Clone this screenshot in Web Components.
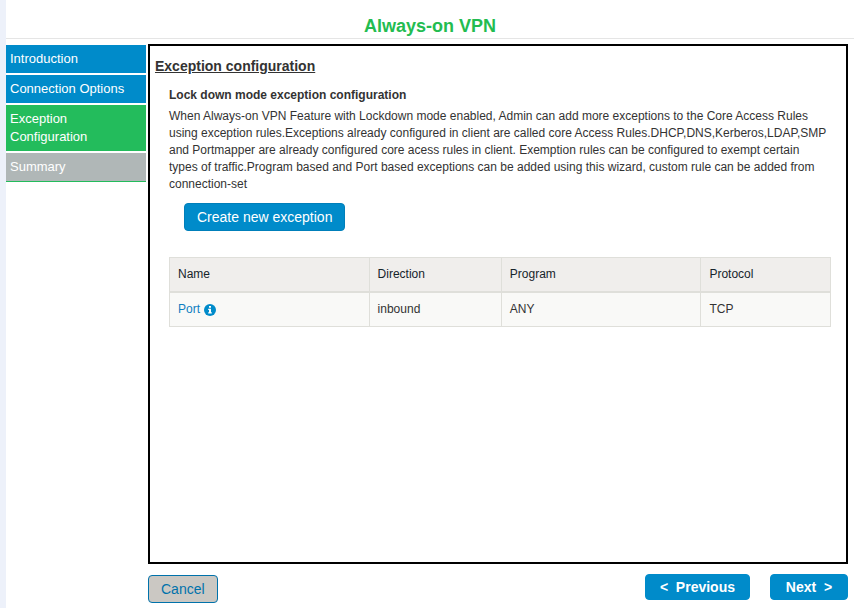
<!DOCTYPE html>
<html lang="en">
<head>
<meta charset="utf-8">
<title>Always-on VPN</title>
<style>
body {
    background-color: #ffffff;
    color: #333333;
    font-family: "Liberation Sans", Arial, sans-serif;
    font-size: 12px;
    line-height: 17px;
    margin: 0;
}
</style>
</head>
<body>

<vpn-wizard heading="Always-on VPN">
    <wizard-step slot="steps" state="done">Introduction</wizard-step>
    <wizard-step slot="steps" state="done">Connection Options</wizard-step>
    <wizard-step slot="steps" state="current">Exception Configuration</wizard-step>
    <wizard-step slot="steps">Summary</wizard-step>

    <exception-panel></exception-panel>

    <wizard-button slot="cancel" kind="cancel">Cancel</wizard-button>
    <wizard-button slot="nav" kind="nav">&lt;&nbsp; Previous</wizard-button>
    <wizard-button slot="nav" kind="nav">Next &nbsp;&gt;</wizard-button>
</vpn-wizard>

<script>
function createTemplate(html) {
    const template = document.createElement('template');
    template.innerHTML = html;
    return template;
}

const wizardTemplate = createTemplate(`<style>
:host {
    border-left: 6px solid #edf1fa;
    box-sizing: border-box;
    display: flex;
    flex-direction: column;
    min-height: 100vh;
}

header {
    border-bottom: 1px solid #e5e5e5;
    padding: 14px 0 0;
}

h1 {
    color: #23bc50;
    font-size: 18px;
    line-height: 24px;
    margin: 0;
    text-align: center;
}

.body {
    display: flex;
    flex: 1;
    gap: 2px;
    padding: 5px 6px 0 0;
}

nav {
    display: flex;
    flex: none;
    flex-direction: column;
    gap: 2px;
    padding-top: 1px;
    width: 140px;
}

main {
    border: 2px solid #000000;
    flex: 1;
    min-width: 0;
}

footer {
    align-items: flex-start;
    display: flex;
    gap: 20px;
    padding: 10px 6px 5px 142px;
}

.cancel {
    margin-right: auto;
    padding-top: 1px;
}
</style>
<header><h1></h1></header>
<div class="body">
    <nav aria-label="Steps"><slot name="steps"></slot></nav>
    <main><slot></slot></main>
</div>
<footer>
    <div class="cancel"><slot name="cancel"></slot></div>
    <slot name="nav"></slot>
</footer>`);

class VpnWizard extends HTMLElement {
    constructor() {
        super();

        this.attachShadow({mode: 'open'});
        this.shadowRoot.appendChild(wizardTemplate.content.cloneNode(true));
    }

    connectedCallback() {
        this.shadowRoot.querySelector('h1').textContent = this.getAttribute('heading');
    }
}

const stepTemplate = createTemplate(`<style>
:host {
    background-color: #b0b7b7;
    border-bottom: 1px solid #23bc5c;
    color: #ffffff;
    display: block;
    font-size: 13px;
    line-height: 18px;
    padding: 5px 4px;
}

:host([state]) {
    border-bottom: 0;
}

:host([state="done"]) {
    background-color: #008bca;
}

:host([state="current"]) {
    background-color: #23bc5c;
}
</style>
<slot></slot>`);

class WizardStep extends HTMLElement {
    constructor() {
        super();

        this.attachShadow({mode: 'open'});
        this.shadowRoot.appendChild(stepTemplate.content.cloneNode(true));
    }

    connectedCallback() {
        if (this.getAttribute('state') === 'current') {
            this.setAttribute('aria-current', 'step');
        }
    }
}

const buttonTemplate = createTemplate(`<style>
:host {
    display: inline-block;
}

button {
    background-color: #008bca;
    border: 1px solid #007fba;
    border-radius: 4px;
    box-sizing: border-box;
    color: #ffffff;
    cursor: pointer;
    display: block;
    font-family: inherit;
    font-size: 14px;
    height: 28px;
    line-height: 20px;
    padding: 0 12px;
    white-space: nowrap;
}

:host([kind="nav"]) button {
    border-color: #008bca;
    font-weight: bold;
    height: 26px;
    min-width: 78px;
    padding: 0 14px;
}

:host([kind="cancel"]) button {
    background-color: #cbc8c3;
    border-color: #0072ab;
    color: #0072ab;
}
</style>
<button type="button"><slot></slot></button>`);

class WizardButton extends HTMLElement {
    constructor() {
        super();

        this.attachShadow({mode: 'open'});
        this.shadowRoot.appendChild(buttonTemplate.content.cloneNode(true));
    }
}

const panelTemplate = createTemplate(`<style>
:host {
    display: block;
    padding: 10px 15px 16px 5px;
}

h2 {
    font-size: 14px;
    line-height: 20px;
    margin: 0 0 11px;
    text-decoration: underline;
}

h3 {
    font-size: 12px;
    line-height: 17px;
    margin: 0 0 4px;
}

.content {
    padding-left: 14px;
}

p {
    margin: 0;
}

.actions {
    padding: 10px 15px 26px;
}
</style>
<h2>Exception configuration</h2>
<div class="content">
    <h3>Lock down mode exception configuration</h3>
    <p>When Always-on VPN Feature with Lockdown mode enabled, Admin can add more exceptions to the Core Access Rules<br>
    using exception rules.Exceptions already configured in client are called core Access Rules.DHCP,DNS,Kerberos,LDAP,SMP<br>
    and Portmapper are already configured core acess rules in client. Exemption rules can be configured to exempt certain<br>
    types of traffic.Program based and Port based exceptions can be added using this wizard, custom rule can be added from<br>
    connection-set</p>
    <div class="actions"><wizard-button>Create new exception</wizard-button></div>
    <exception-table></exception-table>
</div>`);

class ExceptionPanel extends HTMLElement {
    constructor() {
        super();

        this.attachShadow({mode: 'open'});
        this.shadowRoot.appendChild(panelTemplate.content.cloneNode(true));
    }
}

const tableTemplate = createTemplate(`<style>
:host {
    display: block;
}

table {
    border-collapse: collapse;
    table-layout: fixed;
    width: 100%;
}

.wide {
    width: 30.2%;
}

.narrow {
    width: 20%;
}

th, td {
    border: 1px solid #dfdfda;
    font-weight: normal;
    height: 33px;
    padding: 0 8px;
    text-align: left;
}

th {
    background-color: #f0eeec;
    border-bottom: 2px solid #dfdfda;
    color: #16242b;
}

td {
    background-color: #f9f9f7;
}

a {
    align-items: center;
    color: #0f7fc1;
    display: flex;
    gap: 4px;
    text-decoration: none;
}

svg {
    display: block;
    height: 12px;
    width: 12px;
}
</style>
<table>
    <colgroup><col class="wide"><col class="narrow"><col class="wide"><col></colgroup>
    <thead>
        <tr><th scope="col">Name</th><th scope="col">Direction</th><th scope="col">Program</th><th scope="col">Protocol</th></tr>
    </thead>
    <tbody></tbody>
</table>`);

const infoIcon = `<svg viewBox="0 0 12 12" aria-hidden="true">
    <circle cx="6" cy="6" r="6" fill="#008bca"/>
    <path fill="#ffffff" d="M5 2h2v1.7H5zM4.2 4.8H7v3.4h.8v1.2H4.2V8.2H5V6h-.8z"/>
</svg>`;

const rules = [
    {name: 'Port', direction: 'inbound', program: 'ANY', protocol: 'TCP'}
];

class ExceptionTable extends HTMLElement {
    constructor() {
        super();

        this.attachShadow({mode: 'open'});
        this.shadowRoot.appendChild(tableTemplate.content.cloneNode(true));
    }

    connectedCallback() {
        this.shadowRoot.querySelector('tbody').innerHTML = rules.map(rule => `<tr>
            <td><a href="#">${rule.name}${infoIcon}</a></td>
            <td>${rule.direction}</td>
            <td>${rule.program}</td>
            <td>${rule.protocol}</td>
        </tr>`).join('');
    }
}

customElements.define('wizard-button', WizardButton);
customElements.define('wizard-step', WizardStep);
customElements.define('exception-table', ExceptionTable);
customElements.define('exception-panel', ExceptionPanel);
customElements.define('vpn-wizard', VpnWizard);
</script>
</body>
</html>
